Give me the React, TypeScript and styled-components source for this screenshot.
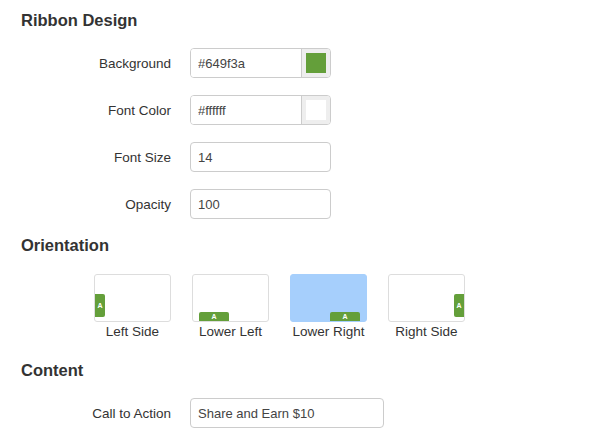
import styled, { createGlobalStyle } from 'styled-components';
import type { JSX } from 'react';

const GlobalStyle = createGlobalStyle`
  body {
    margin: 0;
    background: #ffffff;
    font-family: "Liberation Sans", Arial, sans-serif;
    color: #333333;
  }
`;

type Side = 'left' | 'lowerLeft' | 'lowerRight' | 'right';

const orientations: { side: Side; label: string; active?: boolean }[] = [
  { side: 'left', label: 'Left Side' },
  { side: 'lowerLeft', label: 'Lower Left' },
  { side: 'lowerRight', label: 'Lower Right', active: true },
  { side: 'right', label: 'Right Side' },
];

export default function App(): JSX.Element {
  return (
    <>
      <GlobalStyle />
      <Page>
        <Heading>Ribbon Design</Heading>
        <Form>
          <Row>
            <Label>Background</Label>
            <InputGroup>
              <GroupInput defaultValue="#649f3a" />
              <Addon>
                <Swatch $color="#649f3a" />
              </Addon>
            </InputGroup>
          </Row>
          <Row>
            <Label>Font Color</Label>
            <InputGroup>
              <GroupInput defaultValue="#ffffff" />
              <Addon>
                <Swatch $color="#ffffff" />
              </Addon>
            </InputGroup>
          </Row>
          <Row>
            <Label>Font Size</Label>
            <TextInput defaultValue="14" />
          </Row>
          <Row>
            <Label>Opacity</Label>
            <TextInput defaultValue="100" />
          </Row>
        </Form>

        <Heading>Orientation</Heading>
        <Options>
          {orientations.map((o) => (
            <Option key={o.side}>
              <Preview $active={o.active}>
                <Ribbon $side={o.side}>A</Ribbon>
              </Preview>
              <OptionLabel>{o.label}</OptionLabel>
            </Option>
          ))}
        </Options>

        <Heading>Content</Heading>
        <Form>
          <Row>
            <Label>Call to Action</Label>
            <TextInput $wide defaultValue="Share and Earn $10" />
          </Row>
        </Form>
      </Page>
    </>
  );
}

const Page = styled.div`
  padding: 10px 21px 0;
  display: flex;
  flex-direction: column;
`;

const Heading = styled.h3`
  margin: 0;
  font-size: 16.5px;
  line-height: 20px;
  font-weight: bold;
  color: #333333;
  font-family: "Liberation Sans", Arial, sans-serif;
`;

const Form = styled.div`
  display: flex;
  flex-direction: column;
  gap: 17px;
  margin-top: 18px;
  margin-bottom: 16px;
`;

const Row = styled.div`
  display: flex;
  align-items: center;
  gap: 19px;
`;

const Label = styled.label`
  width: 150px;
  text-align: right;
  font-size: 13.5px;
  color: #333333;
`;

const TextInput = styled.input<{ $wide?: boolean }>`
  box-sizing: border-box;
  width: ${(p): string => (p.$wide ? '194px' : '141px')};
  height: 30px;
  padding: 0 7px;
  border: 1px solid #cccccc;
  border-radius: 4px;
  font-family: "Liberation Sans", Arial, sans-serif;
  font-size: 13px;
  color: #444444;
  outline: none;
`;

const InputGroup = styled.div`
  display: flex;
  box-sizing: border-box;
  width: 141px;
  height: 30px;
  border: 1px solid #cccccc;
  border-radius: 4px;
  overflow: hidden;
`;

const GroupInput = styled.input`
  flex: 1;
  min-width: 0;
  border: none;
  padding: 0 7px;
  font-family: "Liberation Sans", Arial, sans-serif;
  font-size: 13px;
  color: #444444;
  outline: none;
`;

const Addon = styled.div`
  width: 28px;
  border-left: 1px solid #cccccc;
  background: #eeeeee;
  display: flex;
  align-items: center;
  justify-content: center;
`;

const Swatch = styled.span<{ $color: string }>`
  width: 20px;
  height: 20px;
  background: ${(p): string => p.$color};
`;

const Options = styled.div`
  display: flex;
  gap: 21px;
  padding-left: 73px;
  margin-top: 19px;
  margin-bottom: 20px;
`;

const Option = styled.div`
  display: flex;
  flex-direction: column;
  align-items: center;
  width: 77px;
  gap: 2px;
`;

const Preview = styled.div<{ $active?: boolean }>`
  position: relative;
  box-sizing: border-box;
  width: 77px;
  height: 48px;
  border: 1px solid ${(p): string => (p.$active ? '#a6cffc' : '#dddddd')};
  border-radius: 3px;
  background: ${(p): string => (p.$active ? '#a6cffc' : '#ffffff')};
  overflow: hidden;
`;

const Ribbon = styled.span<{ $side: Side }>`
  position: absolute;
  display: flex;
  align-items: center;
  justify-content: center;
  background: #649f3a;
  color: #ffffff;
  font-size: 7px;
  font-weight: bold;
  ${(p): string => {
    switch (p.$side) {
      case 'left':
        return 'left: 0; top: 19px; width: 10px; height: 23px; border-radius: 0 2px 2px 0;';
      case 'right':
        return 'right: 0; top: 19px; width: 10px; height: 23px; border-radius: 2px 0 0 2px;';
      case 'lowerLeft':
        return 'left: 6px; bottom: 0; width: 30px; height: 9px; border-radius: 2px 2px 0 0;';
      default:
        return 'right: 6px; bottom: 0; width: 30px; height: 9px; border-radius: 2px 2px 0 0;';
    }
  }}
`;

const OptionLabel = styled.span`
  font-size: 13.5px;
  line-height: 16px;
  color: #333333;
  white-space: nowrap;
`;
